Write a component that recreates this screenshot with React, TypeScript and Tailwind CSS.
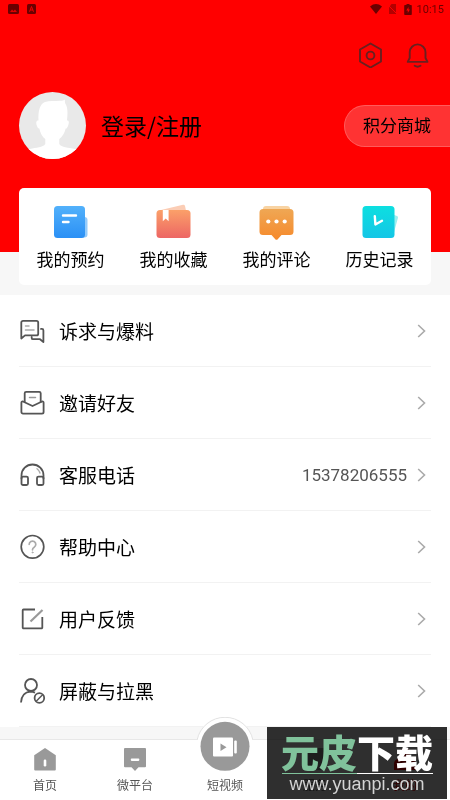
/**
 * 个人中心页面
 */

import type { ReactNode } from 'react';

interface Entry {
    label: string;
    icon: ReactNode;
    extra?: string;
}

// 顶部卡片快捷入口
const shortcuts: Entry[] = [
    {
        label: '我的预约',
        icon: (
            <svg className="w-9 h-9" viewBox="0 0 36 36" fill="none">
                <defs>
                    <linearGradient id="blue" x1="0" y1="0" x2="0" y2="1">
                        <stop stopColor="#52b1fb" />
                        <stop offset="1" stopColor="#2b90f5" />
                    </linearGradient>
                </defs>
                <rect x="24" y="13" width="10.5" height="20.5" rx="3" fill="#94cbfb" />
                <rect x="1" y="2" width="31" height="32" rx="3.5" fill="url(#blue)" />
                <path d="M10 11.5h13M10 18h5.5" stroke="#fff" strokeWidth="2.4" strokeLinecap="round" />
            </svg>
        ),
    },
    {
        label: '我的收藏',
        icon: (
            <svg className="w-9 h-9" viewBox="0 0 36 36" fill="none">
                <defs>
                    <linearGradient id="coral" x1="0" y1="0" x2="0" y2="1">
                        <stop stopColor="#fba069" />
                        <stop offset="1" stopColor="#ed6664" />
                    </linearGradient>
                </defs>
                <path d="M5 6 27 .8q1.6-.3 2 1.2l1 4.5H5z" fill="#fbcdb5" />
                <rect x=".5" y="6" width="34" height="28" rx="3.5" fill="url(#coral)" />
                <path d="M6.8 6h5.8v11.2l-2.9-2.6-2.9 2.6z" fill="#fff" />
            </svg>
        ),
    },
    {
        label: '我的评论',
        icon: (
            <svg className="w-9 h-9" viewBox="0 0 36 36" fill="none">
                <defs>
                    <linearGradient id="orange" x1="0" y1="0" x2="0" y2="1">
                        <stop stopColor="#efa754" />
                        <stop offset="1" stopColor="#f68a2c" />
                    </linearGradient>
                </defs>
                <rect x="4" y="2" width="27" height="8" rx="3" fill="#f8d3a3" />
                <path
                    d="M4 5h27a3.5 3.5 0 0 1 3.5 3.5v19A3.5 3.5 0 0 1 31 31h-8.5l-4 4.4q-1 .9-2 0L12.500 31H4A3.5 3.5 0 0 1 .5 27.5v-19A3.5 3.5 0 0 1 4 5z"
                    fill="url(#orange)"
                />
                <circle cx="9.3" cy="17.5" r="2.1" fill="#fff" />
                <circle cx="17.5" cy="17.5" r="2.1" fill="#fff" />
                <circle cx="25.7" cy="17.5" r="2.1" fill="#fff" />
            </svg>
        ),
    },
    {
        label: '历史记录',
        icon: (
            <svg className="w-9 h-9" viewBox="0 0 36 36" fill="none">
                <defs>
                    <linearGradient id="cyan" x1="0" y1="0" x2="0" y2="1">
                        <stop stopColor="#0ddfe0" />
                        <stop offset="1" stopColor="#14c6e6" />
                    </linearGradient>
                </defs>
                <path d="M31 10.5 35 12q1.3.6.9 2L32 28.5h-1z" fill="#9deff0" />
                <rect x=".5" y="2" width="32" height="32" rx="3.5" fill="url(#cyan)" />
                <path d="M12.8 12.2 13.4 20.5 20 16.8" stroke="#fff" strokeWidth="2.4" strokeLinecap="round" strokeLinejoin="round" />
            </svg>
        ),
    },
];

const lineIcon = 'w-7 h-7 shrink-0 stroke-[#555]';

// 功能列表
const menu: Entry[] = [
    {
        label: '诉求与爆料',
        icon: (
            <svg className={lineIcon} viewBox="0 0 28 28" fill="none" strokeWidth="1.8" strokeLinejoin="round" strokeLinecap="round">
                <path d="M2.3 21.5V5.5a1.7 1.7 0 0 1 1.7-1.7h13.5a1.7 1.7 0 0 1 1.7 1.7v11.2a1.7 1.7 0 0 1-1.7 1.7H6z" />
                <path d="M22 11.900h.9a1.5 1.5 0 0 1 1.5 1.5V25L21 22.2h-7a1.3 1.3 0 0 1-1.3-1.3v-1" />
                <path d="M6.5 9h3.5M6.5 13h8.5" stroke="#aaa" strokeWidth="1.5" />
            </svg>
        ),
    },
    {
        label: '邀请好友',
        icon: (
            <svg className={lineIcon} viewBox="0 0 28 28" fill="none" strokeWidth="1.8" strokeLinejoin="round" strokeLinecap="round">
                <path d="M5.7 13V4.300A1.5 1.5 0 0 1 7.2 2.8h13a1.5 1.5 0 0 1 1.5 1.5V13" />
                <path d="M4 12.5 13.5 17l9.5-4.5q1.6-.3 1.6 1.3v9.2a1.6 1.6 0 0 1-1.6 1.6H4A1.6 1.6 0 0 1 2.4 23v-9.2q0-1.6 1.6-1.3z" />
                <path d="M10.5 8.5h6" stroke="#999" strokeWidth="1.5" />
            </svg>
        ),
    },
    {
        label: '客服电话',
        extra: '15378206555',
        icon: (
            <svg className={lineIcon} viewBox="0 0 28 28" fill="none" strokeWidth="1.8" strokeLinejoin="round" strokeLinecap="round">
                <path d="M2.5 17.5V14.5a11 11 0 0 1 22 0v3" />
                <rect x="2.5" y="15.6" width="6.5" height="8.4" rx="1.5" />
                <rect x="18" y="15.6" width="6.5" height="8.4" rx="1.5" />
                <path d="M18 7.7q2.3 1.6 3 4.3" stroke="#aaa" strokeWidth="1.4" />
            </svg>
        ),
    },
    {
        label: '帮助中心',
        icon: (
            <svg className={lineIcon} viewBox="0 0 28 28" fill="none" strokeWidth="1.7" strokeLinecap="round">
                <circle cx="13.5" cy="13.8" r="11.3" />
                <path d="M10.2 11.3a3.3 3.3 0 1 1 5 2.900q-1.700 1-1.700 2.600" stroke="#aaa" />
                <circle cx="13.5" cy="19.4" r=".5" stroke="#aaa" strokeWidth="1" />
            </svg>
        ),
    },
    {
        label: '用户反馈',
        icon: (
            <svg className={lineIcon} viewBox="0 0 28 28" fill="none" strokeWidth="1.8" strokeLinejoin="round">
                <path d="M16 4.5H4.5a.8.8 0 0 0-.8.8v17.2a.8.8 0 0 0 .8.8H22.500a.8.8 0 0 0 .8-.8V12" />
                <path d="M11.5 16.5 23.5 5" stroke="#999" strokeWidth="2.2" />
            </svg>
        ),
    },
    {
        label: '屏蔽与拉黑',
        icon: (
            <svg className={lineIcon} viewBox="0 0 28 28" fill="none" strokeWidth="1.8">
                <circle cx="12" cy="8" r="6" />
                <path d="M2 25.5C2.4 19 6 14.8 11.5 14.6q2.3 0 4.5 1" />
                <circle cx="20.4" cy="21" r="4.8" />
                <path d="m17.2 24.3 6.4-6.600" strokeWidth="1.4" />
            </svg>
        ),
    },
];

function StatusBar() {
    return (
        <div className="flex h-[18px] items-center justify-between px-[6px] text-[#6b0000]">
            <div className="flex items-center gap-2 pl-[2px]">
                <svg className="h-[10px] w-[11px]" viewBox="0 0 11 10">
                    <rect width="11" height="10" rx="1.5" fill="currentColor" />
                    <path d="m2 8 2-2.5L5.5 7 7 5.500 9 8z" fill="#e00000" />
                </svg>
                <svg className="h-[10px] w-[9px]" viewBox="0 0 9 10">
                    <rect width="9" height="10" rx="1.5" fill="currentColor" />
                    <path d="M2.5 7.7 4.5 2.5l2 5.2M3.2 6h2.6" fill="none" stroke="#f00" strokeWidth=".9" />
                </svg>
            </div>
            <div className="flex items-center">
                <svg className="h-[10px] w-[12px]" viewBox="0 0 12 10">
                    <path d="M0 2.5Q6-2.3 12 2.5L6 10z" fill="currentColor" />
                </svg>
                <svg className="ml-[6px] h-[10px] w-[9px]" viewBox="0 0 9 10">
                    <path d="M1 3.5 3.5 0H8v10H1z" fill="#b40000" />
                    <path d="m0 1 9 9" stroke="#f00" strokeWidth="1" />
                </svg>
                <svg className="ml-[7px] h-[11px] w-[8px]" viewBox="0 0 8 11">
                    <path d="M2.5 0h3v1H7q.8 0 .8.8v8.4q0 .8-.8.8H1q-.8 0-.8-.8V1.8Q.2 1 1 1h1.5z" fill="currentColor" />
                    <path d="M4.5 3 2.3 6.5h1.5v2.5L5.9 5.500H4.500z" fill="#f00" />
                </svg>
                <span className="ml-[5px] font-['Roboto',sans-serif] text-[11px] leading-none">10:15</span>
            </div>
        </div>
    );
}

function Avatar() {
    return (
        <svg className="h-[67px] w-[67px] rounded-full bg-[#e9e9e9]" viewBox="0 0 67 67">
            <path
                d="M19.5 28.5C19 20 20.5 12 26 10c4-1.3 10-.8 15-1.2 2.5 0 4-.6 4.8-1.3l.2 3.5C49 15 48.8 22 48 28.500c2.3-.3 2.2 2.5 1 5.500-.7 1.7-1.5 3-2.3 2.5-1 4.5-3.7 8.5-6.4 10.5v5c2 3.5 9 3.5 15.7 5L67 62v5H0v-5l11-5c6-1.5 13-1.5 15.3-5v-5c-3-2-5-6-6-10.5-1 .5-1.8-1-2.3-2.5-1.2-3-1-5.8 1.5-5.500z"
                fill="#fff"
            />
        </svg>
    );
}

function Header() {
    return (
        <header className="h-[252px] bg-[#ff0000]">
            <StatusBar />
            <div className="flex justify-end gap-[21px] pt-6 pr-5">
                <button type="button" aria-label="设置">
                    <svg className="h-[26px] w-[26px]" viewBox="0 0 26 26" fill="none" stroke="#692020" strokeWidth="1.9" strokeLinejoin="round">
                        <path d="M13.500 1.500 24 7.500v12L13.500 25.500 3 19.500v-12z" />
                        <circle cx="13.5" cy="13.5" r="3.9" />
                    </svg>
                </button>
                <button type="button" aria-label="消息">
                    <svg className="h-[26px] w-[26px]" viewBox="0 0 26 26" fill="none" stroke="#692020" strokeWidth="1.9" strokeLinejoin="round" strokeLinecap="round">
                        <path d="M5.700 16V10.300a7.900 7.900 0 0 1 15.800 0V16l2 3.900H3.700z" />
                        <path d="M10.700 23.800q2.900 1.900 5.800 0" />
                    </svg>
                </button>
            </div>
            <div className="flex items-center pt-6 pl-[19px]">
                <Avatar />
                <a href="#login" className="ml-[15px] pb-[2px] text-[23px] leading-8">
                    登录/注册
                </a>
                <button
                    type="button"
                    className="ml-auto h-[42px] rounded-l-full border border-r-0 border-[#ff5c5c] bg-[#ff3333] pr-[19px] pb-[2px] pl-[18px] text-[17px]"
                >
                    积分商城
                </button>
            </div>
        </header>
    );
}

function MenuRow({ label, icon, extra }: Entry) {
    return (
        <li className="border-b border-[#f2f2f2]">
            <button type="button" className="flex h-[71px] w-full items-center text-left">
                {icon}
                <span className="ml-3 flex-1 pt-[2px] text-[19px]">{label}</span>
                {extra && <span className="mr-1 pt-[2px] font-['Roboto',sans-serif] text-[17px] text-[#555]">{extra}</span>}
                <svg className="h-5 w-5" viewBox="0 0 20 20" fill="none" stroke="#aaa" strokeWidth="1.6">
                    <path d="m7.200 4 6.300 6-6.300 6" />
                </svg>
            </button>
        </li>
    );
}

const tabClass = 'flex flex-1 flex-col items-center text-[12px] leading-5 text-[#555]';

function TabBar() {
    return (
        <nav className="flex border-t border-[#e8e8e8] bg-white pt-[7px] pb-[5px]">
            <a href="#home" className={tabClass}>
                <svg className="mb-1 h-6 w-6" viewBox="0 0 24 24" fill="#999">
                    <path d="M12 1 22.8 8.3V22.500a1 1 0 0 1-1 1H2.200a1 1 0 0 1-1-1V8.300z" />
                    <rect x="10.7" y="12.5" width="2.6" height="7" rx="1.2" fill="#fff" />
                </svg>
                首页
            </a>
            <a href="#platform" className={tabClass}>
                <svg className="mb-1 h-6 w-6" viewBox="0 0 24 24" fill="#999">
                    <path d="M2 1h20a1 1 0 0 1 1 1v17.300a1 1 0 0 1-1 1h-6.500L12 24l-3.500-3.700H2a1 1 0 0 1-1-1V2a1 1 0 0 1 1-1z" />
                    <rect x="7.8" y="11.5" width="8.5" height="2.4" rx=".8" fill="#fff" />
                </svg>
                微平台
            </a>
            <a href="#video" className={tabClass}>
                <svg className="-mt-[30px] h-[58px] w-[58px]" viewBox="0 0 58 58">
                    <circle cx="29" cy="29" r="29" fill="#fff" />
                    <path d="M1.1 23A28.5 28.5 0 0 1 56.9 23" fill="none" stroke="#e2e2e2" />
                    <circle cx="29" cy="29.3" r="24.5" fill="#999" />
                    <rect x="17" y="20.5" width="20" height="19" rx="1" fill="#fff" />
                    <rect x="38.2" y="23.5" width="2.6" height="13" rx="1" fill="#fff" />
                    <path d="m24.5 26.5 6 3.7-6 3.7z" fill="#999" />
                </svg>
                短视频
            </a>
            <a href="#service" className={tabClass}>
                <svg className="mb-1 h-6 w-6" viewBox="0 0 24 24" fill="#999">
                    <rect x="1" y="1" width="22" height="22" rx="2" />
                </svg>
                服务
            </a>
            <a href="#mine" className="flex flex-1 flex-col items-center text-[12px] leading-5 text-[#ff0000]">
                <svg className="mb-1 h-6 w-6" viewBox="0 0 24 24" fill="#ff0000">
                    <circle cx="12" cy="6" r="5" />
                    <path d="M1 23v-6q0-5 5-5h12q5 0 5 5v6z" />
                </svg>
                我的
            </a>
        </nav>
    );
}

// 右下角站点水印
function SiteMark() {
    return (
        <div className="pointer-events-none absolute right-[3px] bottom-px h-[72px] w-[180px] bg-[#2f2f2f] mix-blend-multiply" />
    );
}

function SiteMarkText() {
    return (
        <div className="pointer-events-none absolute right-[3px] bottom-px flex h-[72px] w-[180px] flex-col items-center">
            <p className="mt-[6px] text-[38px] leading-9 font-black text-white">
                <span className="text-[#80c29b]">元皮</span>下载
            </p>
            <div className="mt-1 flex h-px w-[151px]">
                <span className="flex-1 bg-[#80c29b]" />
                <span className="flex-1 bg-white" />
            </div>
            <p className="font-['Liberation_Sans',sans-serif] text-[18px] leading-5 text-[#d4d4d4]">www.yuanpi.com</p>
        </div>
    );
}

export default function App() {
    return (
        <div className="relative flex min-h-screen flex-col bg-[#f7f7f7] font-['Noto_Sans_CJK_SC',sans-serif] text-black">
            <Header />
            <section className="mx-[19px] -mt-16 grid grid-cols-4 rounded-[5px] bg-white pt-4 pb-[14px]">
                {shortcuts.map((item) => (
                    <button key={item.label} type="button" className="flex flex-col items-center gap-[7px] text-[17px] leading-6">
                        {item.icon}
                        {item.label}
                    </button>
                ))}
            </section>
            <main className="mt-[10px] mb-auto bg-white px-[19px]">
                <ul>
                    {menu.map((item) => (
                        <MenuRow key={item.label} {...item} />
                    ))}
                </ul>
            </main>
            <TabBar />
            <SiteMark />
            <SiteMarkText />
        </div>
    );
}
